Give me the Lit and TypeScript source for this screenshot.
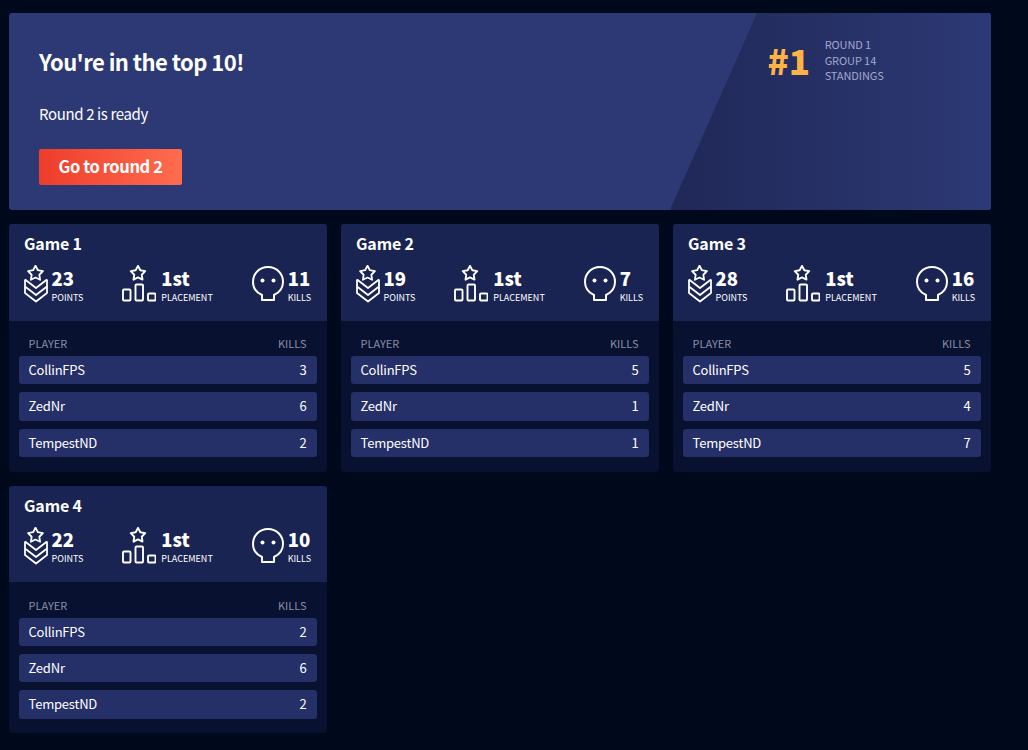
import { LitElement, html, css, svg } from "lit";
import { customElement } from "lit/decorators.js";

const games = [
  { name: "Game 1", points: 23, kills: 11, rows: [3, 6, 2] },
  { name: "Game 2", points: 19, kills: 7, rows: [5, 1, 1] },
  { name: "Game 3", points: 28, kills: 16, rows: [5, 4, 7] },
  { name: "Game 4", points: 22, kills: 10, rows: [2, 6, 2] },
];
const players = ["CollinFPS", "ZedNr", "TempestND"];

const star = (cx: number, cy: number, r: number) => {
  const pts: string[] = [];
  for (let i = 0; i < 10; i++) {
    const rad = i % 2 === 0 ? r : r * 0.52;
    const a = -Math.PI / 2 + (i * Math.PI) / 5;
    pts.push(`${(cx + rad * Math.cos(a)).toFixed(2)},${(cy + rad * Math.sin(a)).toFixed(2)}`);
  }
  return svg`<polygon points=${pts.join(" ")} stroke-linejoin="round" />`;
};

const pointsIcon = html`<svg class="ic" width="24" height="38" viewBox="0 0 24 38" fill="none" stroke="#fff" stroke-width="1.8" stroke-linejoin="round">
  ${star(11.5, 8.5, 7.8)}
  <path d="M1 14.5 V28 L12 36.5 L23 28 V14.5" />
  <path d="M1 14.5 L12 23 L23 14.5" />
  <path d="M1 21.5 L12 30 L23 21.5" />
</svg>`;

const placeIcon = html`<svg class="ic" width="34" height="38" viewBox="0 0 34 38" fill="none" stroke="#fff" stroke-width="1.9">
  ${star(16, 8.5, 7.6)}
  <rect x="1" y="24.5" width="7.5" height="11" rx="1"/>
  <rect x="13.5" y="19.5" width="7.5" height="16" rx="1"/>
  <rect x="26" y="28.5" width="7.5" height="7" rx="1"/>
</svg>`;

const skullIcon = html`<svg class="ic" width="32" height="38" viewBox="0 0 32 38" fill="none" stroke="#fff" stroke-width="2">
  <path d="M10 35 L22 35 L22 30 C27.5 27.5 31 22.5 31 17 C31 8.5 24.5 2 16 2 C7.5 2 1 8.5 1 17 C1 22.5 4.5 27.5 10 30 Z" stroke-linejoin="round"/>
  <circle cx="10.5" cy="15.5" r="2" fill="#fff" stroke="none"/>
  <circle cx="21.5" cy="15.5" r="2" fill="#fff" stroke="none"/>
</svg>`;

@customElement("app-root")
export class AppRoot extends LitElement {
  static styles = css`
    :host {
      display: block;
      min-height: 750px;
      background: #00081b;
      font-family: "Noto Sans CJK SC", "Noto Sans", sans-serif;
      color: #fff;
      box-sizing: border-box;
      padding: 13px 37px 17px 9px;
    }
    .banner {
      position: relative;
      height: 197px;
      background: #2d3975;
      border-radius: 3px;
      overflow: hidden;
      margin-bottom: 14px;
      padding: 32px 30px 0;
      box-sizing: border-box;
    }
    .slant {
      position: absolute;
      inset: 0 0 0 661px;
      background: linear-gradient(90deg, #1f2857 0%, #2d3975 100%);
      clip-path: polygon(87px 0, 100% 0, 100% 100%, 0 100%);
    }
    h1 {
      margin: 0;
      font-size: 22px;
      line-height: 32px;
      font-weight: 700;
      letter-spacing: -0.55px;
    }
    .sub {
      font-size: 15px;
      line-height: 22px;
      margin-top: 26px;
      letter-spacing: -0.37px;
    }
    .btn {
      display: block;
      margin-top: 24px;
      width: 143px;
      height: 36px;
      line-height: 35px;
      text-align: center;
      font-size: 16.5px;
      font-weight: 700;
      letter-spacing: -0.4px;
      border-radius: 2px;
      background: linear-gradient(90deg, #ee3d2c, #ff6c4e);
    }
    .rank {
      position: absolute;
      left: 758.5px;
      top: 25px;
      display: flex;
      gap: 14.5px;
    }
    .num {
      font-size: 35px;
      font-weight: 900;
      line-height: 48px;
      color: #ffb347;
      margin-top: -2px;
    }
    .lines {
      font-size: 11px;
      line-height: 15.5px;
      color: #a3a8cc;
      margin-top: -1px;
      letter-spacing: -0.1px;
    }
    .grid {
      display: grid;
      grid-template-columns: repeat(3, 318px);
      gap: 14px;
      align-items: start;
    }
    .card {
      background: #091130;
      border-radius: 3px;
      overflow: hidden;
    }
    .head {
      background: #1a2453;
      height: 96.6px;
      padding: 7px 15px 0;
      box-sizing: border-box;
    }
    h2 {
      margin: 0;
      font-size: 16px;
      line-height: 24px;
      font-weight: 700;
      letter-spacing: -0.15px;
    }
    .stats {
      display: flex;
      justify-content: space-between;
      margin-top: 10px;
      padding-right: 1px;
    }
    .stat {
      display: flex;
      align-items: flex-start;
      gap: 3.5px;
    }
    .stat-place { gap: 5px; }
    .stat-kills { gap: 4px; }
    .ic { display: block; flex: none; }
    .val {
      font-size: 18.5px;
      line-height: 24px;
      font-weight: 800;
      margin-top: 0.7px;
    }
    .lab {
      font-size: 9px;
      line-height: 12px;
      text-transform: uppercase;
      margin-top: 2px;
    }
    .body {
      padding: 14.4px 10px 14.8px;
    }
    .th {
      display: flex;
      justify-content: space-between;
      font-size: 11px;
      line-height: 16px;
      color: #8a8fa6;
      padding: 0 10.5px 0 9.5px;
      margin-bottom: 5px;
    }
    .rows { display: flex; flex-direction: column; gap: 8px; }
    .row {
      display: flex;
      justify-content: space-between;
      align-items: center;
      height: 28.3px;
      padding: 0 10.5px 1px 9.5px;
      box-sizing: border-box;
      background: #252f68;
      border-radius: 3px;
      font-size: 13px;
      letter-spacing: -0.2px;
    }
  `;

  render() {
    return html`
      <section class="banner">
        <div class="slant"></div>
        <h1>You're in the top 10!</h1>
        <div class="sub">Round 2 is ready</div>
        <div class="btn">Go to round 2</div>
        <div class="rank">
          <div class="num">#1</div>
          <div class="lines"><div>ROUND 1</div><div>GROUP 14</div><div>STANDINGS</div></div>
        </div>
      </section>
      <div class="grid">
        ${games.map(
          (g) => html`<article class="card">
            <div class="head">
              <h2>${g.name}</h2>
              <div class="stats">
                <div class="stat">${pointsIcon}<div><div class="val">${g.points}</div><div class="lab">Points</div></div></div>
                <div class="stat stat-place">${placeIcon}<div><div class="val">1st</div><div class="lab">Placement</div></div></div>
                <div class="stat stat-kills">${skullIcon}<div><div class="val">${g.kills}</div><div class="lab">Kills</div></div></div>
              </div>
            </div>
            <div class="body">
              <div class="th"><span>PLAYER</span><span>KILLS</span></div>
              <div class="rows">
                ${players.map(
                  (p, i) => html`<div class="row"><span>${p}</span><span>${g.rows[i]}</span></div>`
                )}
              </div>
            </div>
          </article>`
        )}
      </div>
    `;
  }
}
